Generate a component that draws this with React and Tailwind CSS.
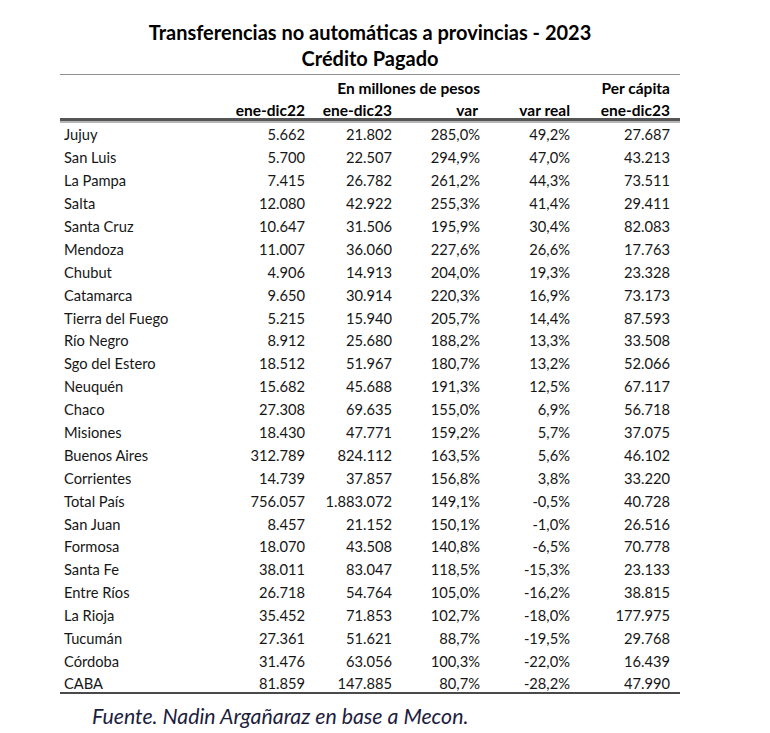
import React from "react";

const filas = [
  ["Jujuy", "5.662", "21.802", "285,0%", "49,2%", "27.687"],
  ["San Luis", "5.700", "22.507", "294,9%", "47,0%", "43.213"],
  ["La Pampa", "7.415", "26.782", "261,2%", "44,3%", "73.511"],
  ["Salta", "12.080", "42.922", "255,3%", "41,4%", "29.411"],
  ["Santa Cruz", "10.647", "31.506", "195,9%", "30,4%", "82.083"],
  ["Mendoza", "11.007", "36.060", "227,6%", "26,6%", "17.763"],
  ["Chubut", "4.906", "14.913", "204,0%", "19,3%", "23.328"],
  ["Catamarca", "9.650", "30.914", "220,3%", "16,9%", "73.173"],
  ["Tierra del Fuego", "5.215", "15.940", "205,7%", "14,4%", "87.593"],
  ["Río Negro", "8.912", "25.680", "188,2%", "13,3%", "33.508"],
  ["Sgo del Estero", "18.512", "51.967", "180,7%", "13,2%", "52.066"],
  ["Neuquén", "15.682", "45.688", "191,3%", "12,5%", "67.117"],
  ["Chaco", "27.308", "69.635", "155,0%", "6,9%", "56.718"],
  ["Misiones", "18.430", "47.771", "159,2%", "5,7%", "37.075"],
  ["Buenos Aires", "312.789", "824.112", "163,5%", "5,6%", "46.102"],
  ["Corrientes", "14.739", "37.857", "156,8%", "3,8%", "33.220"],
  ["Total País", "756.057", "1.883.072", "149,1%", "-0,5%", "40.728"],
  ["San Juan", "8.457", "21.152", "150,1%", "-1,0%", "26.516"],
  ["Formosa", "18.070", "43.508", "140,8%", "-6,5%", "70.778"],
  ["Santa Fe", "38.011", "83.047", "118,5%", "-15,3%", "23.133"],
  ["Entre Ríos", "26.718", "54.764", "105,0%", "-16,2%", "38.815"],
  ["La Rioja", "35.452", "71.853", "102,7%", "-18,0%", "177.975"],
  ["Tucumán", "27.361", "51.621", "88,7%", "-19,5%", "29.768"],
  ["Córdoba", "31.476", "63.056", "100,3%", "-22,0%", "16.439"],
  ["CABA", "81.859", "147.885", "80,7%", "-28,2%", "47.990"],
];

const cols = "grid grid-cols-[160px_85px_87px_88px_90px_100px_10px]";

export default function App() {
  return (
    <div className="w-[770px] h-[733px] bg-white pt-[19px] font-['Lato',sans-serif] text-[#161616]">
      <div className="ml-[60px] w-[620px]">
        <div className="text-center font-bold text-[20px] leading-[26px] text-black whitespace-nowrap">
          <div>Transferencias no automáticas a provincias - 2023</div>
          <div>Crédito Pagado</div>
        </div>

        <div className="h-px bg-[#8f8f8f] mt-[3px]" />

        {/* encabezado */}
        <div className={`${cols} font-bold text-[15.5px] text-black`}>
          <div className="col-start-3 col-span-2 h-[24px] pb-[3px] flex items-end justify-end leading-[16px]">
            En millones de pesos
          </div>
          <div className="col-start-6 h-[24px] pb-[3px] flex items-end justify-end leading-[16px]">
            Per cápita
          </div>
          <div className="col-start-2 h-[19px] flex items-end justify-end leading-[16px]">ene-dic22</div>
          <div className="h-[19px] flex items-end justify-end leading-[16px]">ene-dic23</div>
          <div className="h-[19px] flex items-end justify-end leading-[16px] pr-[2px]">var</div>
          <div className="h-[19px] flex items-end justify-end leading-[16px]">var real</div>
          <div className="h-[19px] flex items-end justify-end leading-[16px]">ene-dic23</div>
        </div>

        <div className="h-[3px] bg-[#555555]" />
        <div className="h-[2px] bg-[#b5b5b5]" />

        {/* filas */}
        {filas.map((f, i) => {
          const ultima = i === filas.length - 1;
          return (
            <div
              key={f[0]}
              className={`${cols} text-[14.7px] items-center ${ultima ? "h-[20px]" : "h-[22.9px]"}`}
            >
              <div className="pl-[4px] whitespace-nowrap">{f[0]}</div>
              <div className="text-right">{f[1]}</div>
              <div className="text-right">{f[2]}</div>
              <div className="text-right">{f[3]}</div>
              <div className="text-right">{f[4]}</div>
              <div className="text-right">{f[5]}</div>
            </div>
          );
        })}
        <div className="h-[2px] bg-[#4a4a4a]" />
      </div>

      <div className="pl-[92px] mt-[9px] italic text-[21.3px] text-[#1d1d3d] leading-[26px]">
        Fuente. Nadin Argañaraz en base a Mecon.
      </div>
    </div>
  );
}
